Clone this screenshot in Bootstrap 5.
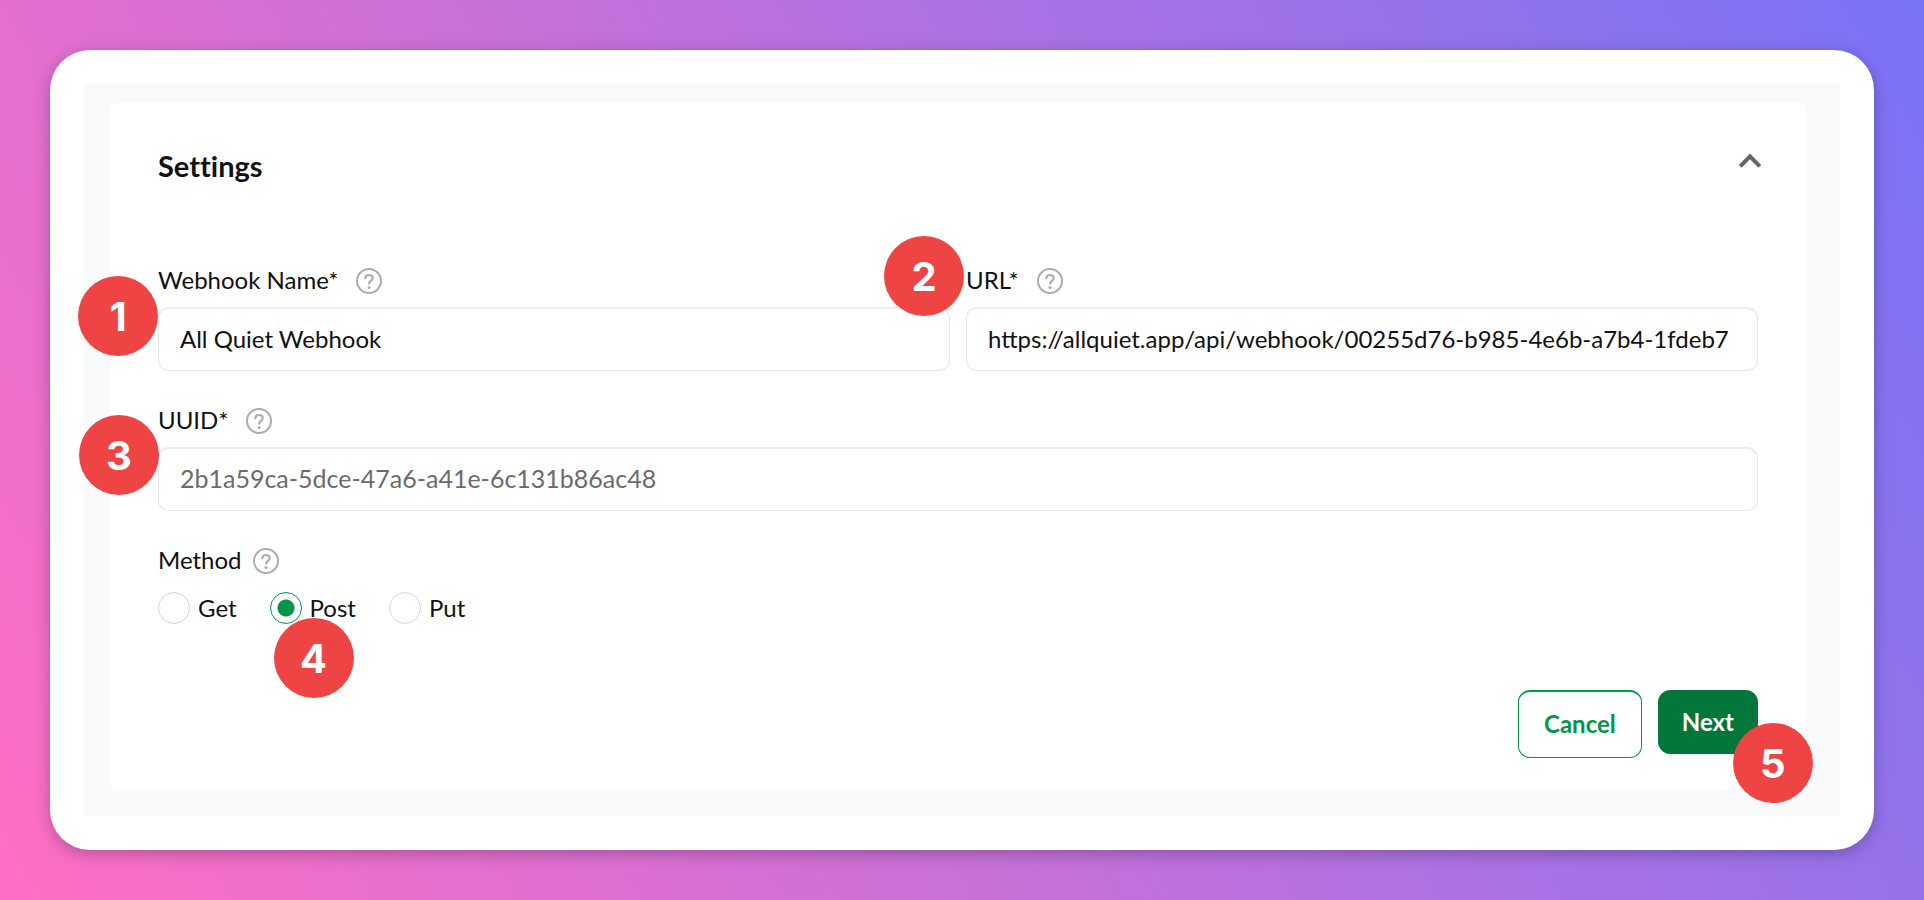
<!DOCTYPE html>
<html lang="en">
<head>
<meta charset="utf-8">
<meta name="viewport" content="width=device-width, initial-scale=1">
<title>Webhook settings</title>
<link href="https://cdn.jsdelivr.net/npm/bootstrap@5.3.0/dist/css/bootstrap.min.css" rel="stylesheet">
<style>
  body { font-family: Lato, "Open Sans", sans-serif; font-size: 24px; line-height: 32px; color: #111; background: linear-gradient(60deg, #ff6ec4, #7873f5) no-repeat; min-height: 100vh; }
  .stage { min-height: 100vh; padding: 50px; }
  .sheet { background: #fff; border-radius: 40px; padding: 34px; box-shadow: 0 4px 16px rgba(0, 0, 0, .25); }
  .backdrop { background: #f9fafc; padding: 19px 34px 26px 26px; }
  .panel { background: #fff; border-radius: 8px; padding: 43px 48px 31px; }
  .panel-head { margin-bottom: 78px; }
  .panel-title { font-size: 29px; line-height: 40px; font-weight: 700; font-variant-ligatures: none; }
  .toggle { width: 24px; height: 28px; color: #666; margin-right: -4px; }
  .field-label { line-height: 32px; }
  .field-head { height: 32px; margin-bottom: 11px; gap: 18px; }
  .field-head.tight { gap: 11px; margin-bottom: 16px; }
  .field { margin-bottom: 33px; }
  .fields { --bs-gutter-x: 16px; }
  .help { width: 26px; height: 26px; color: #acacac; margin-top: 1px; }
  .field .form-control { height: 64px; padding: 0 20px 2px 21px; font-size: 24px; border: 1px solid #e6e6e6; border-top: 2px solid #ececec; border-radius: 11px; color: #111; }
  .field .form-control::placeholder { font-size: 25px; color: #6b6b6b; opacity: 1; }
  .methods { gap: 33px; margin-bottom: 66px; }
  .method { gap: 8px; }
  .method .form-check-input { width: 32px; height: 32px; margin: 0; border: 1px solid #d4d4d4; background: #fff; }
  .method .form-check-input:checked { border: 1px solid #05964a; background: radial-gradient(circle, #05964a 8px, #fff 9px); }
  .actions { gap: 16px; }
  .action { height: 64px; padding: 0 23px; font-size: 24px; font-weight: 700; border-radius: 12px; }
  .action-cancel { height: 68px; padding: 0 25px 2px; color: #05964a; border: 1px solid #05964a; border-top-width: 2px; background: #fff; }
  .action-next { color: #fff; background: #03763a; border: 1px solid #03763a; }
  .step { position: absolute; z-index: 2; width: 80px; height: 80px; border-radius: 50%; background: #ef4444; color: #fff; font: 700 40px/82px Inter, sans-serif; text-align: center; }
  .step-name { left: -80px; top: 12px; }
  .step-url { left: -82px; top: -28px; }
  .step-uuid { left: -79px; top: 11px; }
  .step-method { left: 4px; top: 26px; }
  .step-next { left: 75px; top: 33px; }
</style>
</head>
<body>
<svg class="d-none" aria-hidden="true">
  <symbol id="help" viewBox="0 0 26 26" fill="none" stroke="currentColor">
    <circle cx="13" cy="13" r="12" stroke-width="2"/>
    <path d="M9.4 10.3C9.4 8.3 10.9 7 13.1 7c2.100 0 3.600 1.300 3.600 3.100 0 1.500-.9 2.200-1.900 2.900-1.100.7-1.700 1.200-1.700 2.600" stroke-width="2.200" stroke-linecap="round"/>
    <circle cx="13.1" cy="19.400" r="1.500" fill="currentColor" stroke="none"/>
  </symbol>
</svg>
<main class="stage d-flex flex-column">
  <div class="sheet flex-grow-1 d-flex flex-column">
    <div class="backdrop flex-grow-1 d-flex flex-column">
      <form class="panel flex-grow-1 d-flex flex-column">
        <div class="panel-head d-flex justify-content-between align-items-start">
          <h1 class="panel-title mb-0">Settings</h1>
          <button type="button" class="toggle btn p-0 border-0 d-flex" aria-label="Collapse settings">
            <svg width="24" height="28" viewBox="0 0 24 28" fill="none" stroke="currentColor" stroke-width="4"><path d="M2.200 20.400 12 10.300l9.800 10.100"/></svg>
          </button>
        </div>
        <div class="fields row">
          <div class="col-6">
            <div class="field position-relative">
              <div class="field-head d-flex align-items-center">
                <label class="field-label" for="name">Webhook Name*</label>
                <svg class="help"><use href="#help"/></svg>
              </div>
              <input class="form-control" id="name" type="text" value="All Quiet Webhook">
              <span class="step step-name">1</span>
            </div>
          </div>
          <div class="col-6">
            <div class="field position-relative">
              <div class="field-head d-flex align-items-center">
                <label class="field-label" for="url">URL*</label>
                <svg class="help"><use href="#help"/></svg>
              </div>
              <input class="form-control" id="url" type="text" value="https://allquiet.app/api/webhook/00255d76-b985-4e6b-a7b4-1fdeb7">
              <span class="step step-url">2</span>
            </div>
          </div>
        </div>
        <div class="field position-relative">
          <div class="field-head d-flex align-items-center">
            <label class="field-label" for="uuid">UUID*</label>
            <svg class="help"><use href="#help"/></svg>
          </div>
          <input class="form-control" id="uuid" type="text" placeholder="2b1a59ca-5dce-47a6-a41e-6c131b86ac48">
          <span class="step step-uuid">3</span>
        </div>
        <div class="field-head tight d-flex align-items-center">
          <span class="field-label" id="method-label">Method</span>
          <svg class="help"><use href="#help"/></svg>
        </div>
        <div class="methods d-flex" role="radiogroup" aria-labelledby="method-label">
          <div class="method d-flex align-items-center">
            <input class="form-check-input" type="radio" name="method" id="get">
            <label for="get">Get</label>
          </div>
          <div class="method d-flex align-items-center position-relative">
            <input class="form-check-input" type="radio" name="method" id="post" checked>
            <label for="post">Post</label>
            <span class="step step-method">4</span>
          </div>
          <div class="method d-flex align-items-center">
            <input class="form-check-input" type="radio" name="method" id="put">
            <label for="put">Put</label>
          </div>
        </div>
        <div class="actions d-flex justify-content-end align-items-start">
          <button type="button" class="action action-cancel btn">Cancel</button>
          <div class="position-relative">
            <button type="submit" class="action action-next btn">Next</button>
            <span class="step step-next">5</span>
          </div>
        </div>
      </form>
    </div>
  </div>
</main>
<script src="https://cdn.jsdelivr.net/npm/bootstrap@5.3.0/dist/js/bootstrap.bundle.min.js"></script>
</body>
</html>
